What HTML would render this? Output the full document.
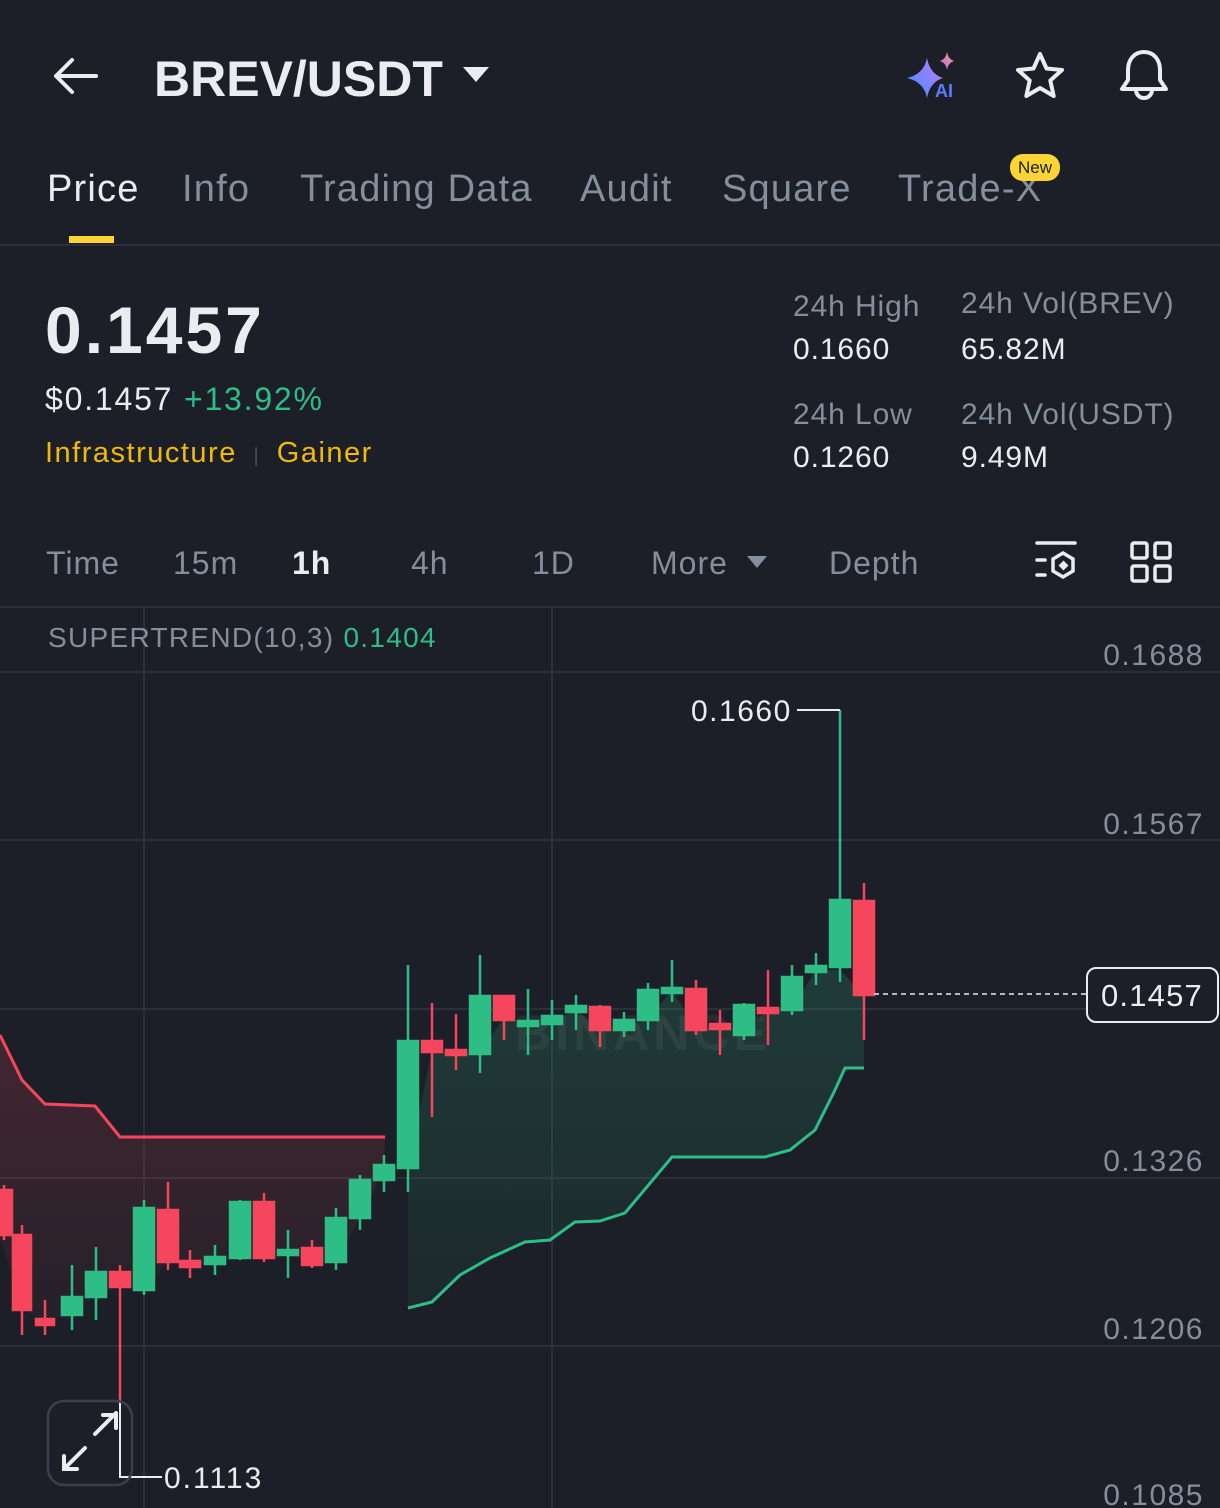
<!DOCTYPE html>
<html><head><meta charset="utf-8"><style>
*{margin:0;padding:0;box-sizing:border-box}
body{width:1220px;height:1508px;background:#1c1f27;color:#eaecef;font-family:"Liberation Sans",sans-serif;position:relative;overflow:hidden}
.a{position:absolute;white-space:nowrap}
.g{color:#848e9c}
.tab{font-size:38px;color:#848e9c;top:168px;letter-spacing:1.2px}
.s{letter-spacing:0.9px}
.tf{letter-spacing:1px}
</style></head><body>
<svg class="a" style="left:50px;top:56px" width="50" height="40" viewBox="0 0 50 40"><path d="M46 20H6M22 4L6 20l16 16" fill="none" stroke="#eaecef" stroke-width="4" stroke-linecap="round" stroke-linejoin="round"/></svg>
<div class="a" style="left:154px;top:50px;font-size:50px;font-weight:bold;color:#eaecef">BREV/USDT</div>
<svg class="a" style="left:462px;top:66px" width="28" height="18"><path d="M1 1h26L14 16z" fill="#eaecef"/></svg>
<svg class="a" style="left:905px;top:50px" width="60" height="52" viewBox="0 0 60 52"><defs><linearGradient id="ai" x1="0" y1="1" x2="1" y2="0"><stop offset="0" stop-color="#3f8cff"/><stop offset="1" stop-color="#c07cff"/></linearGradient><linearGradient id="ai2" x1="0" y1="1" x2="1" y2="0"><stop offset="0" stop-color="#b46cff"/><stop offset="1" stop-color="#ff9a6c"/></linearGradient></defs><path d="M22 8Q25 24 38 28Q25 32 22 48Q19 32 2 28Q19 24 22 8Z" fill="url(#ai)"/><path d="M42 2Q43 9 49 11Q43 13 42 20Q41 13 35 11Q41 9 42 2Z" fill="url(#ai2)"/><text x="30" y="47" font-size="18" font-weight="bold" fill="#5a7cff" font-family="Liberation Sans">AI</text></svg>
<svg class="a" style="left:1013px;top:50px" width="54" height="52" viewBox="0 0 54 52"><path d="M27 4l6.5 14.5 15.5 1.5-11.7 10.5 3.4 15.5L27 38l-13.7 8 3.4-15.5L5 20l15.5-1.5z" fill="none" stroke="#eaecef" stroke-width="4" stroke-linejoin="round"/></svg>
<svg class="a" style="left:1117px;top:48px" width="54" height="56" viewBox="0 0 54 56"><path d="M27 4C17 4 11 12 11 22v10l-6 9h44l-6-9V22C43 12 37 4 27 4z" fill="none" stroke="#eaecef" stroke-width="4" stroke-linejoin="round"/><path d="M19 42a8 8 0 0 0 16 0" fill="none" stroke="#eaecef" stroke-width="4"/></svg>

<div class="a tab" style="left:47px;color:#eaecef">Price</div>
<div class="a tab" style="left:182px">Info</div>
<div class="a tab" style="left:300px">Trading Data</div>
<div class="a tab" style="left:580px">Audit</div>
<div class="a tab" style="left:722px">Square</div>
<div class="a tab" style="left:898px">Trade-X</div>
<div class="a" style="left:1010px;top:154px;width:50px;height:27px;border-radius:13px;background:#fcd535;color:#1c1f27;font-size:17px;text-align:center;line-height:27px">New</div>
<div class="a" style="left:69px;top:236px;width:45px;height:7px;background:#fcd535"></div>
<div class="a" style="left:0;top:244px;width:1220px;height:2px;background:#2b2f36"></div>

<div class="a" style="left:45px;top:292px;font-size:66px;font-weight:bold;letter-spacing:3px">0.1457</div>
<div class="a" style="left:45px;top:381px;font-size:32px;letter-spacing:1.8px">$0.1457 <span style="color:#2ebd85">+13.92%</span></div>
<div class="a" style="left:45px;top:437px;font-size:29px;color:#f0b90b;letter-spacing:1.5px">Infrastructure <span style="color:#474d57;font-size:20px">&nbsp;|&nbsp;</span> Gainer</div>
<div class="a g s" style="left:793px;top:290px;font-size:30px">24h High</div>
<div class="a s" style="left:793px;top:333px;font-size:30px">0.1660</div>
<div class="a g s" style="left:961px;top:287px;font-size:30px">24h Vol(BREV)</div>
<div class="a s" style="left:961px;top:333px;font-size:30px">65.82M</div>
<div class="a g s" style="left:793px;top:398px;font-size:30px">24h Low</div>
<div class="a s" style="left:793px;top:441px;font-size:30px">0.1260</div>
<div class="a g s" style="left:961px;top:398px;font-size:30px">24h Vol(USDT)</div>
<div class="a s" style="left:961px;top:441px;font-size:30px">9.49M</div>

<div class="a g tf" style="left:46px;top:545px;font-size:32px">Time</div>
<div class="a g tf" style="left:173px;top:545px;font-size:32px">15m</div>
<div class="a tf" style="left:292px;top:545px;font-size:32px;font-weight:bold">1h</div>
<div class="a g tf" style="left:411px;top:545px;font-size:32px">4h</div>
<div class="a g tf" style="left:532px;top:545px;font-size:32px">1D</div>
<div class="a g tf" style="left:651px;top:545px;font-size:32px">More</div>
<svg class="a" style="left:746px;top:555px" width="22" height="14"><path d="M1 1h20L11 13z" fill="#848e9c"/></svg>
<div class="a g tf" style="left:829px;top:545px;font-size:32px">Depth</div>
<svg class="a" style="left:1034px;top:540px" width="48" height="44" viewBox="0 0 48 44"><g fill="none" stroke="#eaecef" stroke-width="3.5" stroke-linecap="round"><path d="M3 3h38M3 20h8M3 35h8"/><path d="M29 13l10 6v12l-10 6-10-6V19z"/></g><rect x="26" y="22" width="7" height="7" transform="rotate(45 29.5 25.5)" fill="#eaecef"/></svg>
<svg class="a" style="left:1129px;top:540px" width="44" height="44" viewBox="0 0 44 44"><g fill="none" stroke="#eaecef" stroke-width="3.5"><rect x="3" y="3" width="15" height="15" rx="2"/><rect x="26" y="3" width="15" height="15" rx="2"/><rect x="3" y="26" width="15" height="15" rx="2"/><rect x="26" y="26" width="15" height="15" rx="2"/></g></svg>

<svg class="a" style="left:0;top:0" width="1220" height="1508">
<defs>
<linearGradient id="rf" x1="0" y1="0" x2="0" y2="1"><stop offset="0" stop-color="#f6465d" stop-opacity=".18"/><stop offset="1" stop-color="#f6465d" stop-opacity=".04"/></linearGradient>
<linearGradient id="gf" x1="0" y1="0" x2="0" y2="1"><stop offset="0" stop-color="#2ebd85" stop-opacity=".18"/><stop offset="1" stop-color="#2ebd85" stop-opacity=".06"/></linearGradient>
</defs>
<g stroke="#2b2f36" stroke-width="2"><path d="M0 607H1220M0 672H1220M0 840H1220M0 1009H1220M0 1178H1220M0 1346H1220M144 607V1508M552 607V1508"/></g>
<polygon points="0,1035 22,1080 45,1104 95,1106 120,1137 385,1137 384,1170 360,1218 336,1260 312,1262 288,1255 264,1258 240,1258 215,1262 190,1265 168,1262 144,1290 120,1285 96,1295 72,1315 45,1320 22,1310 0,1235" fill="url(#rf)"/>
<polygon points="408,1308 432,1302 460,1275 490,1258 525,1242 550,1240 575,1222 600,1221 625,1213 672,1157 765,1157 790,1150 815,1130 835,1090 845,1068 864,1068 864,995 840,970 816,970 792,1008 768,1010 744,1032 720,1027 696,1028 672,991 648,1018 624,1028 600,1028 576,1010 552,1022 528,1024 504,1018 480,1052 456,1053 432,1050 408,1166" fill="url(#gf)"/>
<text x="515" y="1050" font-size="50" font-weight="bold" fill="#ffffff" fill-opacity=".06" font-family="Liberation Sans" letter-spacing="4">BINANCE</text>
<polyline points="0,1035 22,1080 45,1104 95,1106 120,1137 385,1137" fill="none" stroke="#f6465d" stroke-width="3"/>
<polyline points="408,1308 432,1302 460,1275 490,1258 525,1242 550,1240 575,1222 600,1221 625,1213 672,1157 765,1157 790,1150 815,1130 835,1090 845,1068 864,1068" fill="none" stroke="#2ebd85" stroke-width="3"/>
<g stroke-width="2.5">
<g stroke="#f6465d" fill="#f6465d">
<line x1="4" y1="1185" x2="4" y2="1240"/><rect x="-6" y="1190" width="18" height="45"/>
<line x1="22" y1="1225" x2="22" y2="1335"/><rect x="13" y="1235" width="18" height="75"/>
<line x1="45" y1="1300" x2="45" y2="1335"/><rect x="36" y="1319" width="18" height="6"/>
<line x1="120" y1="1265" x2="120" y2="1400"/><rect x="110" y="1272" width="20" height="15"/>
<line x1="168" y1="1182" x2="168" y2="1270"/><rect x="158" y="1210" width="20" height="52"/>
<line x1="190" y1="1250" x2="190" y2="1278"/><rect x="180" y="1261" width="20" height="6"/>
<line x1="264" y1="1193" x2="264" y2="1262"/><rect x="254" y="1202" width="20" height="56"/>
<line x1="312" y1="1240" x2="312" y2="1268"/><rect x="302" y="1248" width="20" height="17"/>
<line x1="432" y1="1003" x2="432" y2="1117"/><rect x="422" y="1041" width="20" height="11"/>
<line x1="456" y1="1014" x2="456" y2="1070"/><rect x="446" y="1050" width="20" height="5"/>
<line x1="504" y1="996" x2="504" y2="1040"/><rect x="494" y="996" width="20" height="24"/>
<line x1="600" y1="1005" x2="600" y2="1047"/><rect x="590" y="1007" width="20" height="23"/>
<line x1="696" y1="980" x2="696" y2="1035"/><rect x="686" y="989" width="20" height="41"/>
<line x1="720" y1="1010" x2="720" y2="1055"/><rect x="710" y="1024" width="20" height="5"/>
<line x1="768" y1="970" x2="768" y2="1045"/><rect x="758" y="1008" width="20" height="5"/>
<line x1="864" y1="883" x2="864" y2="1040"/><rect x="854" y="901" width="20" height="94"/>
</g>
<g stroke="#2ebd85" fill="#2ebd85">
<line x1="72" y1="1265" x2="72" y2="1330"/><rect x="62" y="1297" width="20" height="18"/>
<line x1="96" y1="1247" x2="96" y2="1320"/><rect x="86" y="1272" width="20" height="25"/>
<line x1="144" y1="1200" x2="144" y2="1295"/><rect x="134" y="1208" width="20" height="82"/>
<line x1="215" y1="1245" x2="215" y2="1275"/><rect x="205" y="1257" width="20" height="7"/>
<line x1="240" y1="1200" x2="240" y2="1260"/><rect x="230" y="1202" width="20" height="56"/>
<line x1="288" y1="1230" x2="288" y2="1278"/><rect x="278" y="1250" width="20" height="5"/>
<line x1="336" y1="1208" x2="336" y2="1270"/><rect x="326" y="1218" width="20" height="44"/>
<line x1="360" y1="1175" x2="360" y2="1230"/><rect x="350" y="1180" width="20" height="38"/>
<line x1="384" y1="1155" x2="384" y2="1192"/><rect x="374" y="1165" width="20" height="15"/>
<line x1="408" y1="965" x2="408" y2="1192"/><rect x="398" y="1041" width="20" height="127"/>
<line x1="480" y1="955" x2="480" y2="1073"/><rect x="470" y="996" width="20" height="58"/>
<line x1="528" y1="989" x2="528" y2="1055"/><rect x="518" y="1021" width="20" height="5"/>
<line x1="552" y1="1000" x2="552" y2="1040"/><rect x="542" y="1016" width="20" height="8"/>
<line x1="576" y1="995" x2="576" y2="1030"/><rect x="566" y="1006" width="20" height="6"/>
<line x1="624" y1="1012" x2="624" y2="1037"/><rect x="614" y="1020" width="20" height="10"/>
<line x1="648" y1="983" x2="648" y2="1030"/><rect x="638" y="990" width="20" height="30"/>
<line x1="672" y1="960" x2="672" y2="1002"/><rect x="662" y="988" width="20" height="5"/>
<line x1="744" y1="1003" x2="744" y2="1040"/><rect x="734" y="1005" width="20" height="30"/>
<line x1="792" y1="965" x2="792" y2="1015"/><rect x="782" y="977" width="20" height="33"/>
<line x1="816" y1="953" x2="816" y2="985"/><rect x="806" y="966" width="20" height="6"/>
<line x1="840" y1="710" x2="840" y2="982"/><rect x="830" y="900" width="20" height="67"/>
</g></g>
<path d="M797 710H840" stroke="#eaecef" stroke-width="2"/>
<path d="M120 1400V1477H162" stroke="#eaecef" stroke-width="2" fill="none"/>
<path d="M874 994H1087" stroke="#eaecef" stroke-width="1.5" stroke-dasharray="5 4"/>
<rect x="1087" y="968" width="131" height="54" rx="9" fill="#1c1f27" stroke="#eaecef" stroke-width="2"/>
<g font-family="Liberation Sans" font-size="30" fill="#848e9c" text-anchor="end" letter-spacing="1.5">
<text x="1204" y="665">0.1688</text><text x="1204" y="834">0.1567</text><text x="1204" y="1171">0.1326</text><text x="1204" y="1339">0.1206</text><text x="1204" y="1505">0.1085</text></g>
<text x="1203" y="1006" font-family="Liberation Sans" font-size="31" fill="#eaecef" text-anchor="end" letter-spacing="1.2">0.1457</text>
<text x="691" y="721" font-family="Liberation Sans" font-size="30" fill="#eaecef" letter-spacing="1.5">0.1660</text>
<text x="164" y="1488" font-family="Liberation Sans" font-size="30" fill="#eaecef" letter-spacing="2">0.1113</text>
<text x="48" y="647" font-family="Liberation Sans" font-size="28" fill="#848e9c" letter-spacing="1.3">SUPERTREND(10,3) <tspan fill="#2ebd85">0.1404</tspan></text>
<rect x="48" y="1401" width="84" height="84" rx="16" fill="none" stroke="#3a3f48" stroke-width="2.5"/>
<g stroke="#eaecef" stroke-width="4" fill="none" stroke-linecap="round"><path d="M95 1434l21-21M103 1415h13v13M85 1448l-21 21M64 1456v13h13"/></g>
</svg>
</body></html>
